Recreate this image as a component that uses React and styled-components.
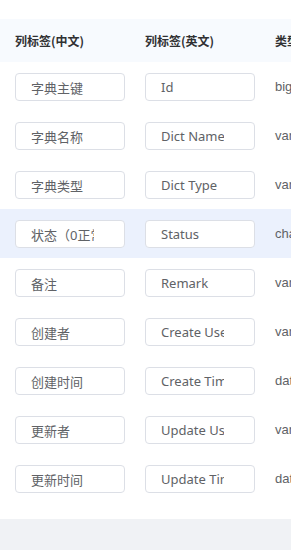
import React from "react";
import styled, { createGlobalStyle } from "styled-components";

const Global = createGlobalStyle`
  html, body { margin: 0; padding: 0; background: #fff; }
  body { font-family: "Liberation Sans", "Noto Sans CJK SC", sans-serif; }
  * { box-sizing: border-box; }
`;

const Page = styled.div`
  width: 291px;
  height: 550px;
  overflow: hidden;
  display: flex;
  flex-direction: column;
  background: #fff;
`;

const Table = styled.div`
  margin-top: 19px;
  display: flex;
  flex-direction: column;
`;

const Row = styled.div`
  display: grid;
  grid-template-columns: 130px 130px 130px;
  align-items: center;
  height: ${(p) => (p.$head ? 43 : 49)}px;
  background: ${(p) => (p.$head ? "#f7fafe" : p.$active ? "#ebf1fd" : "#fff")};
  white-space: nowrap;
`;

const HeadCell = styled.div`
  padding-left: 15px;
  font-size: 12px;
  font-weight: bold;
  color: #303133;
  font-family: "Noto Sans CJK SC", sans-serif;
`;

const Cell = styled.div`
  padding-left: 15px;
  display: flex;
  align-items: center;
  font-size: 13px;
  color: #606266;
  overflow: hidden;
`;

const Input = styled.input`
  width: 110px;
  height: 28px;
  margin-top: 1px;
  border: 1px solid #dcdfe6;
  border-radius: 4px;
  background: #fff;
  padding: 0 30px 0 15px;
  font-size: 13px;
  color: #606266;
  font-family: "Noto Sans", "Noto Sans CJK SC", sans-serif;
  outline: none;
`;

const TypeText = styled.span`
  font-size: 13px;
  color: #606266;
  font-family: "Liberation Sans", sans-serif;
`;

const Spacer = styled.div`
  height: 16px;
  background: #fff;
`;

const Footer = styled.div`
  flex: 1;
  background: #f0f2f5;
`;

const rows = [
  ["字典主键", "Id", "bigint"],
  ["字典名称", "Dict Name", "varchar"],
  ["字典类型", "Dict Type", "varchar"],
  ["状态（0正常 1停用）", "Status", "char"],
  ["备注", "Remark", "varchar"],
  ["创建者", "Create User", "varchar"],
  ["创建时间", "Create Time", "datetime"],
  ["更新者", "Update User", "varchar"],
  ["更新时间", "Update Time", "datetime"],
];

export default function App() {
  return (
    <Page>
      <Global />
      <Table>
        <Row $head>
          <HeadCell>列标签(中文)</HeadCell>
          <HeadCell>列标签(英文)</HeadCell>
          <HeadCell>类型</HeadCell>
        </Row>
        {rows.map((r, i) => (
          <Row key={i} $active={i === 3}>
            <Cell>
              <Input defaultValue={r[0]} readOnly />
            </Cell>
            <Cell>
              <Input defaultValue={r[1]} readOnly />
            </Cell>
            <Cell>
              <TypeText>{r[2]}</TypeText>
            </Cell>
          </Row>
        ))}
      </Table>
      <Spacer />
      <Footer />
    </Page>
  );
}
